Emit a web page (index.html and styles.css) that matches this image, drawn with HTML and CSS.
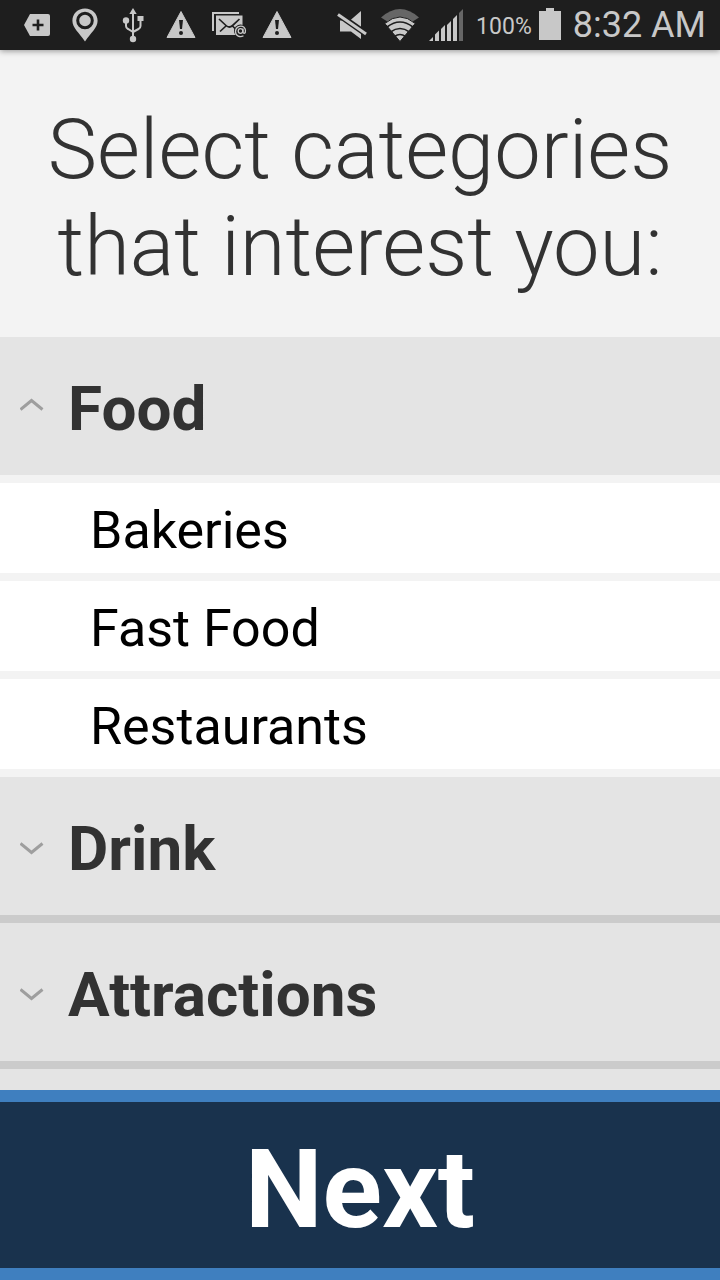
FILE: index.html
```
<!DOCTYPE html>
<html lang="en">
<head>
	<meta charset="UTF-8">
	<meta name="viewport" content="width=device-width,initial-scale=1.0">
	<title>Select categories</title>
	<link rel="stylesheet" href="styles.css">
</head>
<body>
	<div class="status-bar">
		<div class="notifications">
			<svg class="icon" viewBox="0 0 48 50"><path d="M17 14h18q2 0 2 2v18q0 2-2 2H17L11 25z" fill="#c8c8c8"/><path d="M25 19.500v11M19.500 25h11" stroke="#1e1e1e" stroke-width="2.600"/></svg>
			<svg class="icon" viewBox="0 0 48 50"><path d="M24 8.500c-7.200 0-12.600 5.400-12.600 12.300C11.400 28 18 32.500 24 41.500c6-9 12.600-13.500 12.600-20.700C36.600 13.900 31.200 8.500 24 8.500z" fill="#c8c8c8"/><circle cx="24" cy="20.500" r="7.300" fill="#c8c8c8" stroke="#1e1e1e" stroke-width="3"/></svg>
			<svg class="icon" viewBox="0 0 48 50"><g fill="none" stroke="#c8c8c8" stroke-width="2"><path d="M24 12v26M17 20v6q0 2 2 3l5 3M31.500 18v8q0 2-2 3L24 32"/></g><g fill="#c8c8c8"><path d="M24 8l3.700 6h-7.400z"/><circle cx="17" cy="20.500" r="3.200"/><path d="M28.500 16h6v5h-6z"/><circle cx="24" cy="39" r="3.200"/></g></svg>
			<svg class="icon" viewBox="0 0 48 50"><path d="M24 11.500L38 37.500H10z" fill="#c8c8c8" stroke="#c8c8c8" stroke-width="1" stroke-linejoin="round"/><path d="M22 20h4l-1 9h-2z" fill="#1e1e1e"/><circle cx="24" cy="33" r="2" fill="#1e1e1e"/></svg>
			<svg class="icon" viewBox="0 0 48 50"><path d="M8 31V13h26" fill="none" stroke="#c8c8c8" stroke-width="2"/><path d="M11 15.500h26.500V35H11z" fill="#c8c8c8"/><path d="M14 19l7 6.500q3.300 3 6.600 0L34.500 19M15 31.500l6.500-6M27 25.500l4 4" fill="none" stroke="#1e1e1e" stroke-width="1.700"/><circle cx="35.500" cy="31" r="6.500" fill="#1e1e1e"/><circle cx="35.500" cy="31" r="2.300" fill="none" stroke="#c8c8c8" stroke-width="1.300"/><path d="M38 28.500v3.500q.2 1.600 1.600 1.200c1.200-.8 1.300-4.300-.6-6-3.300-2.500-8.500-.3-8.500 4.300 0 4.500 4.600 6.300 8 4.200" fill="none" stroke="#c8c8c8" stroke-width="1.300"/></svg>
			<svg class="icon" viewBox="0 0 48 50"><path d="M24 11.500L38 37.500H10z" fill="#c8c8c8" stroke="#c8c8c8" stroke-width="1" stroke-linejoin="round"/><path d="M22 20h4l-1 9h-2z" fill="#1e1e1e"/><circle cx="24" cy="33" r="2" fill="#1e1e1e"/></svg>
		</div>
		<div class="system">
			<svg class="icon" viewBox="328 0 48 50"><path d="M340 20.500h10L361 11v28l-10-7.500h-11z" fill="#c8c8c8"/><path d="M337 13.500l30 21" stroke="#1e1e1e" stroke-width="6"/><path d="M338 14.500l28 19.500" stroke="#c8c8c8" stroke-width="3"/></svg>
			<svg class="icon" viewBox="376 0 48 50"><path d="M400 29.500L381 17.500Q400 .5 419 17.500z" fill="#666"/><path d="M400 41.500L384.800 23.500Q400 10.500 415.200 23.500z" fill="#c8c8c8" stroke="#1e1e1e"/><path d="M387 27q13-10 26 0M390.500 32q9.500-7 19 0M394.500 36.500q5.500-4 11 0" fill="none" stroke="#1e1e1e" stroke-width="1.600"/></svg>
			<svg class="signal" viewBox="429 0 34 50"><path d="M429 41l4-4v4zM435 34.500l4-4V41h-4zM441 29l4-4v16h-4zM447 25l4-4v20h-4zM453 19l4-4v26h-4z" fill="#c8c8c8"/><path d="M459 13l4-4v32h-4z" fill="#666"/></svg>
			<span class="percent">100%</span>
			<svg class="battery" viewBox="0 0 22 50"><path d="M7 8h8v3h7v29H0V11h7z" fill="#c8c8c8"/></svg>
			<span class="clock">8:32 AM</span>
		</div>
	</div>
	<h1 class="title">Select categories that interest you:</h1>
	<ul class="categories">
		<li class="category open">
			<button class="category-name" type="button" aria-expanded="true"><svg class="arrow" viewBox="0 0 24 18"><path d="M.5 12.500l11-9 11 9"/></svg>Food</button>
			<ul class="items">
				<li><button class="item" type="button">Bakeries</button></li>
				<li><button class="item" type="button">Fast Food</button></li>
				<li><button class="item" type="button">Restaurants</button></li>
			</ul>
		</li>
		<li class="category">
			<button class="category-name" type="button" aria-expanded="false"><svg class="arrow" viewBox="0 0 24 18"><path d="M.5 6.500l11 9 11-9"/></svg>Drink</button>
		</li>
		<li class="category">
			<button class="category-name" type="button" aria-expanded="false"><svg class="arrow" viewBox="0 0 24 18"><path d="M.5 6.500l11 9 11-9"/></svg>Attractions</button>
		</li>
		<li class="category"></li>
	</ul>
	<button class="next" type="button">Next</button>
</body>
</html>
```
FILE: styles.css
```
*{padding:0;margin:0;box-sizing:border-box;}
body{display:flex;flex-direction:column;height:100vh;overflow:hidden;background-color:#f3f3f3;font-family:Roboto,"Liberation Sans",sans-serif;color:#323232;}
button{display:block;width:100%;border:0;font-family:inherit;color:inherit;cursor:pointer;}
ul{list-style:none;}

.status-bar{display:flex;justify-content:space-between;flex:none;height:50px;padding:0 14px 0 13px;background-color:#1e1e1e;color:#c8c8c8;box-shadow:0 1px 6px rgba(0,0,0,.4);}
.notifications,.system{display:flex;align-items:center;}
.icon{width:48px;height:50px;}
.signal{width:34px;height:50px;margin-left:5px;}
.battery{width:22px;height:50px;margin:0 12px 0 7px;}
.percent{margin-left:13px;padding-top:2px;font-size:23px;}
.clock{font-size:36px;}

.title{flex:none;padding:51px 20px 42px;font-size:83px;font-weight:300;line-height:97px;text-align:center;}

.categories{flex:1;min-height:0;overflow:hidden;background-color:#e4e4e4;}
.category{border-bottom:8px solid #cbcbcb;}
.category.open{border-bottom-color:#f3f3f3;}
.category:last-child{border-bottom:0;}
.category-name{display:flex;align-items:center;height:138px;padding:4px 20px 0;background-color:#e4e4e4;font-size:62px;font-weight:bold;text-align:left;}
.arrow{width:24px;height:18px;margin:0 24px 4px 0;fill:none;stroke:#9e9e9e;stroke-width:3;}
.items{border-top:8px solid #f3f3f3;}
.items li + li{border-top:8px solid #f3f3f3;}
.item{height:90px;padding:4px 20px 0 90px;background-color:#fff;font-size:52px;color:#000;text-align:left;}

.next{flex:none;height:190px;padding-top:8px;border-top:12px solid #3f7fbf;border-bottom:12px solid #3f7fbf;background-color:#19324d;font-size:110px;font-weight:bold;color:#fff;}
```
